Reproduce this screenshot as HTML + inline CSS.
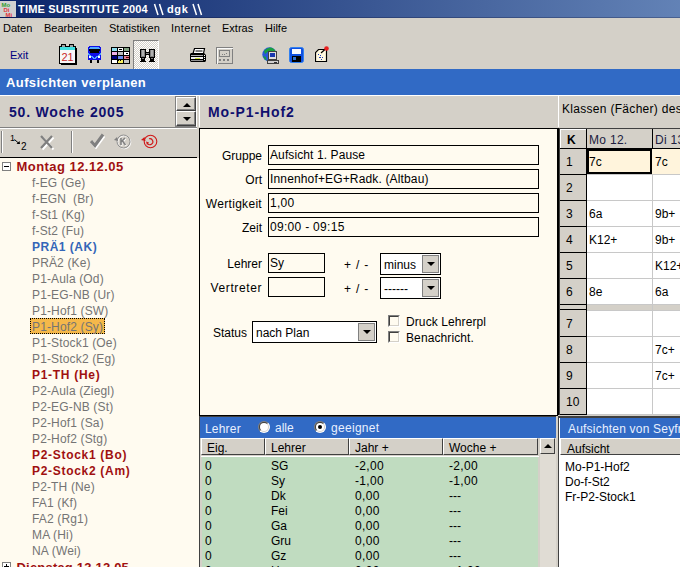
<!DOCTYPE html>
<html><head><meta charset="utf-8"><style>
html,body{margin:0;padding:0;}
body{width:680px;height:567px;overflow:hidden;position:relative;background:#D4D0C8;font-family:"Liberation Sans",sans-serif;}
body>div{position:absolute;white-space:nowrap;}
</style></head><body>
<div style="left:0px;top:0px;width:680px;height:18px;background:linear-gradient(to right,#0A246A 0px,#A6CAF0 1200px);"></div>
<div style="left:0px;top:1px;width:16px;height:16px;background:#D0D0D0;"></div>
<svg style="position:absolute;left:0px;top:1px" width="16" height="16" viewBox="0 0 16 16" shape-rendering="crispEdges"><text x="1.5" y="5.5" font-family="Liberation Sans" font-weight="bold" font-size="6" fill="#30A030" shape-rendering="auto">Mo</text><text x="3.5" y="10.5" font-family="Liberation Sans" font-weight="bold" font-size="6" fill="#E03838" shape-rendering="auto">Di</text><text x="5.5" y="15.5" font-family="Liberation Sans" font-weight="bold" font-size="6" fill="#E03838" shape-rendering="auto">Mi</text></svg>
<div style="left:18px;top:4px;font-size:11px;line-height:11px;font-weight:bold;color:#fff;letter-spacing:0.2px;">TIME SUBSTITUTE 2004</div>
<div style="left:167px;top:4px;font-size:11px;line-height:11px;font-weight:bold;color:#fff;letter-spacing:0.6px;">dgk</div>
<svg style="position:absolute;left:152px;top:3px" width="52" height="13" viewBox="0 0 52 13" shape-rendering="crispEdges"><path d="M2.5 1 L6 12 M7.5 1 L11 12 M41 1 L44.5 12 M46 1 L49.5 12" stroke="#fff" stroke-width="1.5" shape-rendering="auto"/></svg>
<div style="left:0px;top:17px;width:680px;height:1px;background:rgba(0,0,30,0.25);"></div>
<div style="left:3px;top:23px;font-size:11px;line-height:11px;font-weight:normal;color:#000;">Daten</div>
<div style="left:44px;top:23px;font-size:11px;line-height:11px;font-weight:normal;color:#000;">Bearbeiten</div>
<div style="left:109px;top:23px;font-size:11px;line-height:11px;font-weight:normal;color:#000;">Statistiken</div>
<div style="left:171px;top:23px;font-size:11px;line-height:11px;font-weight:normal;color:#000;letter-spacing:0.3px;">Internet</div>
<div style="left:222px;top:23px;font-size:11px;line-height:11px;font-weight:normal;color:#000;">Extras</div>
<div style="left:265px;top:23px;font-size:11px;line-height:11px;font-weight:normal;color:#000;">Hilfe</div>
<div style="left:10px;top:50px;font-size:11px;line-height:11px;font-weight:normal;color:#000080;">Exit</div>
<svg style="position:absolute;left:59px;top:43px" width="19" height="23" viewBox="0 0 19 23" shape-rendering="crispEdges"><rect x="2" y="5" width="16" height="17" fill="#000"/><rect x="0" y="3" width="17" height="18" fill="#000"/><rect x="1" y="4" width="15" height="3" fill="#40E0E0"/><rect x="1" y="7" width="15" height="13" fill="#F8F8F8"/><rect x="2" y="1" width="5" height="3" fill="#000"/><rect x="3" y="2" width="3" height="2" fill="#A0A0A0"/><rect x="10" y="1" width="5" height="3" fill="#000"/><rect x="11" y="2" width="3" height="2" fill="#A0A0A0"/><text x="8.5" y="17.5" font-family="Liberation Sans" font-size="11" fill="#C82828" text-anchor="middle" shape-rendering="auto">21</text></svg>
<svg style="position:absolute;left:88px;top:46px" width="13" height="17" viewBox="0 0 13 17" shape-rendering="crispEdges"><path d="M2 0 H11 Q13 0 13 3 V14 H0 V3 Q0 0 2 0 Z" fill="#1010E8"/><path d="M2 1 H11 L12 3 H1 Z" fill="#50A8FF"/><path d="M1 3 H12 L11 7 H2 Z" fill="#000"/><path d="M0 7 L6.5 12 L13 7 V9 L6.5 13.5 L0 9 Z" fill="#50A8FF"/><rect x="1" y="10" width="2" height="2" fill="#fff"/><rect x="10" y="10" width="2" height="2" fill="#fff"/><rect x="2" y="14" width="2" height="3" fill="#000"/><rect x="9" y="14" width="2" height="3" fill="#000"/></svg>
<svg style="position:absolute;left:111px;top:47px" width="19" height="17" viewBox="0 0 19 17" shape-rendering="crispEdges"><rect x="0" y="0" width="19" height="17" fill="#000"/><rect x="1" y="1" width="5" height="3" fill="#90E0F0"/><rect x="7" y="1" width="5" height="3" fill="#FFFFFF"/><rect x="13" y="1" width="5" height="3" fill="#80A080"/><rect x="1" y="5" width="5" height="3" fill="#F0B0E8"/><rect x="7" y="5" width="5" height="3" fill="#C0C0C0"/><rect x="13" y="5" width="5" height="3" fill="#FFFFFF"/><rect x="1" y="9" width="5" height="3" fill="#000080"/><rect x="7" y="9" width="5" height="3" fill="#6A8CF0"/><rect x="13" y="9" width="5" height="3" fill="#E08090"/><rect x="1" y="13" width="5" height="3" fill="#FFFFFF"/><rect x="7" y="13" width="5" height="3" fill="#F8F060"/><rect x="13" y="13" width="5" height="3" fill="#C8C8C8"/><rect x="15" y="6" width="2" height="1" fill="#000"/><rect x="15" y="10" width="3" height="1" fill="#600000"/><rect x="7" y="13" width="1" height="1" fill="#000"/><rect x="9" y="13" width="1" height="1" fill="#000"/><rect x="8" y="2" width="3" height="1" fill="#000"/></svg>
<div style="left:133px;top:40px;width:26px;height:29px;background:repeating-conic-gradient(#FFFFFF 0 25%, #D4D0C8 0 50%) 0 0/2px 2px;border-top:1px solid #808080;border-left:1px solid #808080;border-right:1px solid #fff;box-sizing:border-box;"></div>
<svg style="position:absolute;left:140px;top:49px" width="15" height="13" viewBox="0 0 15 13" shape-rendering="crispEdges"><rect x="0" y="0" width="6" height="9" fill="#000"/><rect x="9" y="0" width="6" height="9" fill="#000"/><rect x="1" y="1" width="4" height="7" fill="#808080"/><rect x="10" y="1" width="4" height="7" fill="#808080"/><rect x="2" y="1" width="2" height="6" fill="#B0B0B0"/><rect x="11" y="1" width="2" height="6" fill="#B0B0B0"/><rect x="5" y="3" width="5" height="3" fill="#000"/><rect x="6" y="4" width="3" height="1" fill="#808080"/><rect x="1" y="9" width="4" height="3" fill="#000"/><rect x="10" y="9" width="4" height="3" fill="#000"/><rect x="2" y="9" width="2" height="1" fill="#808080"/><rect x="11" y="9" width="2" height="1" fill="#808080"/><rect x="0" y="12" width="6" height="1" fill="#000"/><rect x="9" y="12" width="6" height="1" fill="#000"/></svg>
<svg style="position:absolute;left:189px;top:47px" width="18" height="16" viewBox="0 0 18 16" shape-rendering="crispEdges"><path d="M5.5 1.5 H15.5 L14.5 6.5 H4 Z" fill="#fff" stroke="#000" stroke-width="1.2" shape-rendering="auto"/><path d="M6.5 4 H13.5" stroke="#000" stroke-width="1" shape-rendering="auto"/><path d="M2 6 H15 L17 8 V14 L16 15 H2 L1 14 V7 Z" fill="#000" shape-rendering="auto"/><rect x="2" y="8" width="12" height="1" fill="#B0B0B0"/><rect x="2" y="10" width="12" height="2" fill="#F0F0F0"/><rect x="6" y="11" width="5" height="1" fill="#D0E040"/><rect x="2" y="13" width="12" height="1" fill="#909090"/><rect x="15" y="8" width="1" height="1" fill="#fff"/><rect x="15" y="10" width="1" height="1" fill="#fff"/><rect x="15" y="12" width="1" height="1" fill="#fff"/></svg>
<svg style="position:absolute;left:216px;top:47px" width="17" height="17" viewBox="0 0 17 17" shape-rendering="crispEdges"><rect x="0" y="0" width="16" height="16" fill="none" stroke="#808080" stroke-width="1" transform="translate(0.5 0.5)"/><rect x="1" y="1" width="16" height="16" fill="none" stroke="#fff" stroke-width="1" transform="translate(0.5 0.5)" opacity="0.9"/><rect x="3" y="3" width="10" height="6" fill="none" stroke="#808080" transform="translate(0.5 0.5)"/><rect x="6" y="7" width="1" height="1" fill="#808080"/><rect x="8" y="7" width="1" height="1" fill="#808080"/><rect x="10" y="6" width="1" height="1" fill="#808080"/><rect x="3" y="12" width="2" height="2" fill="#808080"/><rect x="7" y="12" width="2" height="2" fill="#808080"/><rect x="11" y="12" width="2" height="2" fill="#808080"/></svg>
<svg style="position:absolute;left:262px;top:47px" width="17" height="17" viewBox="0 0 17 17" shape-rendering="crispEdges"><circle cx="7.5" cy="7.5" r="7.2" fill="#2858D8" shape-rendering="auto"/><path d="M2 4 Q5 0.5 9 0.5 Q12 1 13.5 4 L10 6 L6 4.5 L3 7 Z" fill="#18A040" shape-rendering="auto"/><path d="M1 9 L4 10 L4.5 13.5 Q2 12 1 9 Z" fill="#18A040" shape-rendering="auto"/><rect x="6" y="4" width="9" height="9" fill="#404040"/><rect x="7" y="5" width="7" height="7" fill="#E0E0E0"/><rect x="8" y="6" width="5" height="4" fill="#1838B0"/><rect x="5" y="13" width="12" height="4" fill="#404040"/><rect x="6" y="14" width="10" height="2" fill="#D0D0D0"/><rect x="12" y="15" width="3" height="1" fill="#303030"/></svg>
<svg style="position:absolute;left:289px;top:47px" width="15" height="17" viewBox="0 0 15 17" shape-rendering="crispEdges"><rect x="0.5" y="0.5" width="14" height="15" rx="2" fill="#1050E0" stroke="#3080F0" stroke-width="1" shape-rendering="auto"/><rect x="3" y="2" width="9" height="5" fill="#F8F8FF"/><rect x="3" y="9" width="9" height="6" fill="#000"/><rect x="4" y="10" width="3" height="3" fill="#3070D0"/></svg>
<svg style="position:absolute;left:315px;top:46px" width="15" height="17" viewBox="0 0 15 17" shape-rendering="crispEdges"><path d="M3.5 3.5 H11.5 V15.5 H0.5 V6.5 Z" fill="#FFF8E0" stroke="#000" stroke-width="1.2" shape-rendering="auto"/><rect x="3" y="8" width="1" height="1" fill="#2040C0"/><rect x="5" y="9" width="1" height="1" fill="#2040C0"/><rect x="4" y="11" width="2" height="1" fill="#2040C0"/><rect x="7" y="11" width="1" height="1" fill="#2040C0"/><rect x="6" y="13" width="1" height="1" fill="#2040C0"/><path d="M6 7 L11 2.5" stroke="#000" stroke-width="1.2" shape-rendering="auto"/><circle cx="11.5" cy="2.5" r="2.3" fill="#E82020" shape-rendering="auto"/></svg>
<div style="left:0px;top:69px;width:680px;height:26px;background:#316AC5;"></div>
<div style="left:0px;top:95px;width:680px;height:1px;background:#fff;"></div>
<div style="left:6px;top:76px;font-size:13px;line-height:13px;font-weight:bold;color:#fff;letter-spacing:0.4px;">Aufsichten verplanen</div>
<div style="left:0px;top:96px;width:197px;height:31px;background:#D4D0C8;"></div>
<div style="left:0px;top:127px;width:197px;height:1px;background:#808080;"></div>
<div style="left:9px;top:105px;font-size:14px;line-height:14px;font-weight:bold;color:#10106E;letter-spacing:0.8px;">50. Woche 2005</div>
<div style="left:175px;top:96px;width:22px;height:31px;background:#808080;"></div>
<div style="left:176px;top:97px;width:20px;height:14px;background:#D4D0C8;border-top:1px solid #fff;border-left:1px solid #fff;border-right:1px solid #404040;border-bottom:1px solid #404040;box-sizing:border-box;box-shadow:inset -1px -1px 0 #808080;"></div>
<div style="left:176px;top:111px;width:20px;height:15px;background:#D4D0C8;border-top:1px solid #fff;border-left:1px solid #fff;border-right:1px solid #404040;border-bottom:1px solid #404040;box-sizing:border-box;box-shadow:inset -1px -1px 0 #808080;"></div>
<div style="left:196px;top:96px;width:1px;height:31px;background:#fff;"></div>
<div style="left:183px;top:103px;width:0;height:0;border-left:4px solid transparent;border-right:4px solid transparent;border-bottom:4px solid #000;"></div>
<div style="left:183px;top:117px;width:0;height:0;border-left:4px solid transparent;border-right:4px solid transparent;border-top:4px solid #000;"></div>
<div style="left:0px;top:128px;width:197px;height:1px;background:#fff;"></div>
<div style="left:0px;top:129px;width:197px;height:28px;background:#D4D0C8;"></div>
<div style="left:0px;top:157px;width:198px;height:1px;background:#000;"></div>
<div style="left:1px;top:131px;width:1px;height:22px;background:#808080;"></div>
<div style="left:2px;top:131px;width:1px;height:22px;background:#fff;"></div>
<div style="left:71px;top:131px;width:1px;height:22px;background:#808080;"></div>
<div style="left:72px;top:131px;width:1px;height:22px;background:#fff;"></div>
<svg style="position:absolute;left:9px;top:133px" width="19" height="19" viewBox="0 0 19 19" shape-rendering="crispEdges"><text x="1" y="8" font-family="Liberation Sans" font-size="9" fill="#000">1</text><text x="12" y="17" font-family="Liberation Sans" font-size="10" fill="#000">2</text><path d="M5.5 6.5 L10 10.5" stroke="#000" stroke-width="1" shape-rendering="auto"/><path d="M7.5 11 L11 11 L10.5 8 Z" fill="#000" shape-rendering="auto"/></svg>
<svg style="position:absolute;left:39px;top:134px" width="16" height="17" viewBox="0 0 16 17" shape-rendering="crispEdges"><path d="M2.5 2.5 L13.5 14.5 M13.5 2.5 L2.5 14.5" stroke="#fff" stroke-width="2" transform="translate(1 1)" shape-rendering="auto"/><path d="M2 2 L13 14 M13 2 L2 14" stroke="#808080" stroke-width="2.2" shape-rendering="auto"/></svg>
<svg style="position:absolute;left:90px;top:133px" width="15" height="16" viewBox="0 0 15 16" shape-rendering="crispEdges"><path d="M1 8 L5 13 L13 2" stroke="#fff" stroke-width="3" fill="none" transform="translate(1 1)" shape-rendering="auto"/><path d="M1 8 L5 12.5 L13 1.5" stroke="#808080" stroke-width="3" fill="none" shape-rendering="auto"/></svg>
<svg style="position:absolute;left:113px;top:134px" width="20" height="16" viewBox="0 0 20 16" shape-rendering="crispEdges"><circle cx="10.5" cy="7.5" r="6.5" stroke="#fff" stroke-width="1" fill="none" transform="translate(0.8 0.8)" shape-rendering="auto"/><circle cx="10.5" cy="7.5" r="6.5" stroke="#909090" stroke-width="1" fill="none" shape-rendering="auto"/><path d="M8 4 V11 M8 8 L12 4 M9.5 7 L12.5 11" stroke="#fff" stroke-width="1.6" fill="none" transform="translate(0.7 0.7)" shape-rendering="auto"/><path d="M8 4 V11 M8 8 L12 4 M9.5 7 L12.5 11" stroke="#808080" stroke-width="1.6" fill="none" shape-rendering="auto"/><path d="M1 6 L4 3 L5 7 Z" fill="#808080" shape-rendering="auto"/></svg>
<svg style="position:absolute;left:140px;top:133px" width="20" height="17" viewBox="0 0 20 17" shape-rendering="crispEdges"><circle cx="10.5" cy="8.5" r="6.3" stroke="#D01818" stroke-width="1.1" fill="none" shape-rendering="auto"/><path d="M7.5 10.5 A3 3 0 1 0 9 5.8" stroke="#D01818" stroke-width="1.1" fill="none" shape-rendering="auto"/><path d="M1 7 L4.5 4 L5.5 8 Z" fill="#D01818" shape-rendering="auto"/><path d="M6 8.5 L9 9.5 L7 12 Z" fill="#D01818" shape-rendering="auto"/></svg>
<div style="left:0px;top:158px;width:199px;height:409px;background:#FFFBF0;"></div>
<div style="left:16.5px;top:160px;font-size:13px;line-height:13px;font-weight:bold;color:#A01010;letter-spacing:0.45px;">Montag 12.12.05</div>
<div style="left:32px;top:177px;font-size:12px;line-height:12px;font-weight:normal;color:#747474;letter-spacing:0.15px;">f-EG (Ge)</div>
<div style="left:32px;top:193px;font-size:12px;line-height:12px;font-weight:normal;color:#747474;letter-spacing:0.15px;">f-EGN&nbsp; (Br)</div>
<div style="left:32px;top:209px;font-size:12px;line-height:12px;font-weight:normal;color:#747474;letter-spacing:0.15px;">f-St1 (Kg)</div>
<div style="left:32px;top:225px;font-size:12px;line-height:12px;font-weight:normal;color:#747474;letter-spacing:0.15px;">f-St2 (Fu)</div>
<div style="left:32px;top:241px;font-size:12px;line-height:12px;font-weight:bold;color:#3466B8;letter-spacing:0.5px;">PRÄ1 (AK)</div>
<div style="left:32px;top:257px;font-size:12px;line-height:12px;font-weight:normal;color:#747474;letter-spacing:0.15px;">PRÄ2 (Ke)</div>
<div style="left:32px;top:273px;font-size:12px;line-height:12px;font-weight:normal;color:#747474;letter-spacing:0.15px;">P1-Aula (Od)</div>
<div style="left:32px;top:289px;font-size:12px;line-height:12px;font-weight:normal;color:#747474;letter-spacing:0.15px;">P1-EG-NB (Ur)</div>
<div style="left:32px;top:305px;font-size:12px;line-height:12px;font-weight:normal;color:#747474;letter-spacing:0.15px;">P1-Hof1 (SW)</div>
<div style="left:30px;top:318px;width:75px;height:16px;background:#F5B84A;outline:1px dotted #000;outline-offset:-1px;"></div>
<div style="left:32px;top:321px;font-size:12px;line-height:12px;font-weight:normal;color:#747474;letter-spacing:0.15px;">P1-Hof2 (Sy)</div>
<div style="left:32px;top:337px;font-size:12px;line-height:12px;font-weight:normal;color:#747474;letter-spacing:0.15px;">P1-Stock1 (Oe)</div>
<div style="left:32px;top:353px;font-size:12px;line-height:12px;font-weight:normal;color:#747474;letter-spacing:0.15px;">P1-Stock2 (Eg)</div>
<div style="left:32px;top:369px;font-size:12px;line-height:12px;font-weight:bold;color:#A01010;letter-spacing:0.7px;">P1-TH (He)</div>
<div style="left:32px;top:385px;font-size:12px;line-height:12px;font-weight:normal;color:#747474;letter-spacing:0.15px;">P2-Aula (Ziegl)</div>
<div style="left:32px;top:401px;font-size:12px;line-height:12px;font-weight:normal;color:#747474;letter-spacing:0.15px;">P2-EG-NB (St)</div>
<div style="left:32px;top:417px;font-size:12px;line-height:12px;font-weight:normal;color:#747474;letter-spacing:0.15px;">P2-Hof1 (Sa)</div>
<div style="left:32px;top:433px;font-size:12px;line-height:12px;font-weight:normal;color:#747474;letter-spacing:0.15px;">P2-Hof2 (Stg)</div>
<div style="left:32px;top:449px;font-size:12px;line-height:12px;font-weight:bold;color:#A01010;letter-spacing:0.7px;">P2-Stock1 (Bo)</div>
<div style="left:32px;top:465px;font-size:12px;line-height:12px;font-weight:bold;color:#A01010;letter-spacing:0.7px;">P2-Stock2 (Am)</div>
<div style="left:32px;top:481px;font-size:12px;line-height:12px;font-weight:normal;color:#747474;letter-spacing:0.15px;">P2-TH (Ne)</div>
<div style="left:32px;top:497px;font-size:12px;line-height:12px;font-weight:normal;color:#747474;letter-spacing:0.15px;">FA1 (Kf)</div>
<div style="left:32px;top:513px;font-size:12px;line-height:12px;font-weight:normal;color:#747474;letter-spacing:0.15px;">FA2 (Rg1)</div>
<div style="left:32px;top:529px;font-size:12px;line-height:12px;font-weight:normal;color:#747474;letter-spacing:0.15px;">MA (Hi)</div>
<div style="left:32px;top:545px;font-size:12px;line-height:12px;font-weight:normal;color:#747474;letter-spacing:0.15px;">NA (Wei)</div>
<div style="left:16.5px;top:561px;font-size:13px;line-height:13px;font-weight:bold;color:#A01010;letter-spacing:0.2px;">Dienstag 13.12.05</div>
<div style="left:2px;top:162px;width:9px;height:9px;border:1px solid #808080;box-sizing:border-box;background:#fff;"></div>
<div style="left:4px;top:166px;width:5px;height:1px;background:#000;"></div>
<div style="left:2px;top:562px;width:9px;height:9px;border:1px solid #808080;box-sizing:border-box;background:#fff;"></div>
<div style="left:4px;top:566px;width:5px;height:1px;background:#000;"></div>
<div style="left:6px;top:564px;width:1px;height:5px;background:#000;"></div>
<div style="left:197px;top:96px;width:2px;height:62px;background:#D4D0C8;"></div>
<div style="left:199px;top:96px;width:358px;height:31px;background:#D4D0C8;"></div>
<div style="left:199px;top:96px;width:1px;height:31px;background:#fff;"></div>
<div style="left:208px;top:105px;font-size:14px;line-height:14px;font-weight:bold;color:#10106E;letter-spacing:0.9px;">Mo-P1-Hof2</div>
<div style="left:199px;top:128px;width:359px;height:288px;background:#FFFBF0;border:1px solid #000;box-sizing:border-box;"></div>
<div style="left:268px;top:145px;width:271px;height:20px;border:1px solid #000;box-sizing:border-box;background:#FFFBF0;"></div>
<div style="left:160px;width:102px;text-align:right;top:150px;font-size:12px;line-height:12px;">Gruppe</div>
<div style="left:270px;top:149px;font-size:12px;line-height:12px;font-weight:normal;color:#000;letter-spacing:0.1px;">Aufsicht 1. Pause</div>
<div style="left:268px;top:169px;width:271px;height:20px;border:1px solid #000;box-sizing:border-box;background:#FFFBF0;"></div>
<div style="left:160px;width:102px;text-align:right;top:174px;font-size:12px;line-height:12px;">Ort</div>
<div style="left:270px;top:173px;font-size:12px;line-height:12px;font-weight:normal;color:#000;letter-spacing:0.15px;">Innenhof+EG+Radk. (Altbau)</div>
<div style="left:268px;top:193px;width:271px;height:20px;border:1px solid #000;box-sizing:border-box;background:#FFFBF0;"></div>
<div style="left:160px;width:102px;text-align:right;top:198px;font-size:12px;line-height:12px;letter-spacing:0.3px;">Wertigkeit</div>
<div style="left:270px;top:197px;font-size:12px;line-height:12px;font-weight:normal;color:#000;letter-spacing:0.3px;">1,00</div>
<div style="left:268px;top:217px;width:271px;height:20px;border:1px solid #000;box-sizing:border-box;background:#FFFBF0;"></div>
<div style="left:160px;width:102px;text-align:right;top:222px;font-size:12px;line-height:12px;">Zeit</div>
<div style="left:270px;top:221px;font-size:12px;line-height:12px;font-weight:normal;color:#000;letter-spacing:0.3px;">09:00 - 09:15</div>
<div style="left:160px;width:102px;text-align:right;top:258px;font-size:12px;line-height:12px">Lehrer</div>
<div style="left:160px;width:102px;text-align:right;top:282px;font-size:12px;line-height:12px;letter-spacing:0.6px">Vertreter</div>
<div style="left:268px;top:253px;width:57px;height:20px;border:1px solid #000;box-sizing:border-box;"></div>
<div style="left:268px;top:277px;width:57px;height:20px;border:1px solid #000;box-sizing:border-box;"></div>
<div style="left:270px;top:257px;font-size:12px;line-height:12px;font-weight:normal;color:#000;">Sy</div>
<div style="left:344px;top:259px;font-size:12px;line-height:12px;font-weight:normal;color:#000;letter-spacing:0.8px;">+ / -</div>
<div style="left:344px;top:283px;font-size:12px;line-height:12px;font-weight:normal;color:#000;letter-spacing:0.8px;">+ / -</div>
<div style="left:380px;top:253px;width:61px;height:22px;border:1px solid #000;box-sizing:border-box;background:#fff;"></div>
<div style="left:422px;top:255px;width:17px;height:18px;border:1px solid #808080;box-sizing:border-box;background:#D4D0C8;"></div>
<div style="left:427px;top:262px;width:0;height:0;border-left:4px solid transparent;border-right:4px solid transparent;border-top:4px solid #000;"></div>
<div style="left:384px;top:259px;font-size:12px;line-height:12px;font-weight:normal;color:#000;">minus</div>
<div style="left:380px;top:277px;width:61px;height:22px;border:1px solid #000;box-sizing:border-box;background:#fff;"></div>
<div style="left:422px;top:279px;width:17px;height:18px;border:1px solid #808080;box-sizing:border-box;background:#D4D0C8;"></div>
<div style="left:427px;top:286px;width:0;height:0;border-left:4px solid transparent;border-right:4px solid transparent;border-top:4px solid #000;"></div>
<div style="left:384px;top:283px;font-size:12px;line-height:12px;font-weight:normal;color:#000;">------</div>
<div style="left:252px;top:321px;width:125px;height:22px;border:1px solid #000;box-sizing:border-box;background:#fff;"></div>
<div style="left:358px;top:323px;width:17px;height:18px;border:1px solid #808080;box-sizing:border-box;background:#D4D0C8;"></div>
<div style="left:363px;top:330px;width:0;height:0;border-left:4px solid transparent;border-right:4px solid transparent;border-top:4px solid #000;"></div>
<div style="left:256px;top:327px;font-size:12px;line-height:12px;font-weight:normal;color:#000;">nach Plan</div>
<div style="left:160px;width:87px;text-align:right;top:327px;font-size:12px;line-height:12px">Status</div>
<div style="left:388px;top:315px;width:12px;height:12px;border-top:1px solid #808080;border-left:1px solid #808080;border-right:1px solid #fff;border-bottom:1px solid #fff;box-sizing:border-box;background:#FFFBF0;"></div>
<div style="left:389px;top:316px;width:10px;height:10px;border-top:1px solid #404040;border-left:1px solid #404040;border-right:1px solid #D4D0C8;border-bottom:1px solid #D4D0C8;box-sizing:border-box;"></div>
<div style="left:388px;top:331px;width:12px;height:12px;border-top:1px solid #808080;border-left:1px solid #808080;border-right:1px solid #fff;border-bottom:1px solid #fff;box-sizing:border-box;background:#FFFBF0;"></div>
<div style="left:389px;top:332px;width:10px;height:10px;border-top:1px solid #404040;border-left:1px solid #404040;border-right:1px solid #D4D0C8;border-bottom:1px solid #D4D0C8;box-sizing:border-box;"></div>
<div style="left:406px;top:316px;font-size:12px;line-height:12px;font-weight:normal;color:#000;letter-spacing:0.1px;">Druck Lehrerpl</div>
<div style="left:406px;top:332px;font-size:12px;line-height:12px;font-weight:normal;color:#000;letter-spacing:0.1px;">Benachricht.</div>
<div style="left:558px;top:96px;width:122px;height:31px;background:#D4D0C8;"></div>
<div style="left:558px;top:95px;width:122px;height:1px;background:#fff;"></div>
<div style="left:558px;top:96px;width:1px;height:31px;background:#fff;"></div>
<div style="left:562px;top:103px;font-size:12px;line-height:12px;font-weight:normal;color:#000;letter-spacing:0.3px;">Klassen (Fächer) des Lehrers</div>
<div style="left:557px;top:128px;width:2px;height:288px;background:#000;"></div>
<div style="left:559px;top:128px;width:121px;height:288px;background:#fff;"></div>
<div style="left:559px;top:128px;width:1px;height:287px;background:#404040;"></div>
<div style="left:559px;top:128px;width:121px;height:1px;background:#404040;"></div>
<div style="left:560px;top:129px;width:120px;height:19px;background:#D4D0C8;"></div>
<div style="left:560px;top:129px;width:26px;height:286px;background:#D4D0C8;"></div>
<div style="left:560px;top:129px;width:1px;height:19px;background:#fff;"></div>
<div style="left:560px;top:129px;width:26px;height:1px;background:#fff;"></div>
<div style="left:586px;top:129px;width:1px;height:286px;background:#000;"></div>
<div style="left:560px;top:148px;width:120px;height:1px;background:#000;"></div>
<div style="left:560px;top:174px;width:26px;height:1px;background:#000;"></div>
<div style="left:587px;top:174px;width:93px;height:1px;background:#C8C8C8;"></div>
<div style="left:566px;top:156px;font-size:12px;line-height:12px;font-weight:normal;color:#000;">1</div>
<div style="left:560px;top:200px;width:26px;height:1px;background:#000;"></div>
<div style="left:587px;top:200px;width:93px;height:1px;background:#C8C8C8;"></div>
<div style="left:566px;top:182px;font-size:12px;line-height:12px;font-weight:normal;color:#000;">2</div>
<div style="left:560px;top:226px;width:26px;height:1px;background:#000;"></div>
<div style="left:587px;top:226px;width:93px;height:1px;background:#C8C8C8;"></div>
<div style="left:566px;top:208px;font-size:12px;line-height:12px;font-weight:normal;color:#000;">3</div>
<div style="left:560px;top:252px;width:26px;height:1px;background:#000;"></div>
<div style="left:587px;top:252px;width:93px;height:1px;background:#C8C8C8;"></div>
<div style="left:566px;top:234px;font-size:12px;line-height:12px;font-weight:normal;color:#000;">4</div>
<div style="left:560px;top:278px;width:26px;height:1px;background:#000;"></div>
<div style="left:587px;top:278px;width:93px;height:1px;background:#C8C8C8;"></div>
<div style="left:566px;top:260px;font-size:12px;line-height:12px;font-weight:normal;color:#000;">5</div>
<div style="left:560px;top:304px;width:26px;height:1px;background:#000;"></div>
<div style="left:587px;top:304px;width:93px;height:1px;background:#C8C8C8;"></div>
<div style="left:566px;top:286px;font-size:12px;line-height:12px;font-weight:normal;color:#000;">6</div>
<div style="left:560px;top:336px;width:26px;height:1px;background:#000;"></div>
<div style="left:587px;top:336px;width:93px;height:1px;background:#C8C8C8;"></div>
<div style="left:566px;top:318px;font-size:12px;line-height:12px;font-weight:normal;color:#000;">7</div>
<div style="left:560px;top:362px;width:26px;height:1px;background:#000;"></div>
<div style="left:587px;top:362px;width:93px;height:1px;background:#C8C8C8;"></div>
<div style="left:566px;top:344px;font-size:12px;line-height:12px;font-weight:normal;color:#000;">8</div>
<div style="left:560px;top:388px;width:26px;height:1px;background:#000;"></div>
<div style="left:587px;top:388px;width:93px;height:1px;background:#C8C8C8;"></div>
<div style="left:566px;top:370px;font-size:12px;line-height:12px;font-weight:normal;color:#000;">9</div>
<div style="left:560px;top:414px;width:26px;height:1px;background:#000;"></div>
<div style="left:587px;top:414px;width:93px;height:1px;background:#C8C8C8;"></div>
<div style="left:566px;top:396px;font-size:12px;line-height:12px;font-weight:normal;color:#000;">10</div>
<div style="left:560px;top:304px;width:26px;height:1px;background:#000;"></div>
<div style="left:587px;top:304px;width:93px;height:1px;background:#C8C8C8;"></div>
<div style="left:587px;top:305px;width:93px;height:5px;background:#D4D0C8;"></div>
<div style="left:560px;top:309px;width:26px;height:1px;background:#000;"></div>
<div style="left:587px;top:310px;width:93px;height:1px;background:#C8C8C8;"></div>
<div style="left:652px;top:129px;width:1px;height:19px;background:#000;"></div>
<div style="left:652px;top:149px;width:1px;height:266px;background:#C8C8C8;"></div>
<div style="left:587px;top:149px;width:93px;height:25px;background:#FFF4DC;"></div>
<div style="left:587px;top:149px;width:65px;height:25px;border:2px solid #000;box-sizing:border-box;"></div>
<div style="left:567px;top:134px;font-size:12px;line-height:12px;font-weight:bold;color:#000;">K</div>
<div style="left:589px;top:134px;font-size:12px;line-height:12px;font-weight:normal;color:#202040;letter-spacing:0.3px;">Mo 12.</div>
<div style="left:655px;top:134px;font-size:12px;line-height:12px;font-weight:normal;color:#202040;letter-spacing:0.3px;">Di 13.</div>
<div style="left:589px;top:156px;font-size:12px;line-height:12px;font-weight:normal;color:#000;">7c</div>
<div style="left:655px;top:156px;font-size:12px;line-height:12px;font-weight:normal;color:#000;">7c</div>
<div style="left:589px;top:208px;font-size:12px;line-height:12px;font-weight:normal;color:#000;">6a</div>
<div style="left:655px;top:208px;font-size:12px;line-height:12px;font-weight:normal;color:#000;">9b+</div>
<div style="left:589px;top:234px;font-size:12px;line-height:12px;font-weight:normal;color:#000;">K12+</div>
<div style="left:655px;top:234px;font-size:12px;line-height:12px;font-weight:normal;color:#000;">9b+</div>
<div style="left:655px;top:260px;font-size:12px;line-height:12px;font-weight:normal;color:#000;">K12+</div>
<div style="left:589px;top:286px;font-size:12px;line-height:12px;font-weight:normal;color:#000;">8e</div>
<div style="left:655px;top:286px;font-size:12px;line-height:12px;font-weight:normal;color:#000;">6a</div>
<div style="left:655px;top:344px;font-size:12px;line-height:12px;font-weight:normal;color:#000;">7c+</div>
<div style="left:655px;top:370px;font-size:12px;line-height:12px;font-weight:normal;color:#000;">7c+</div>
<div style="left:558px;top:415px;width:122px;height:2px;background:#D4D0C8;"></div>
<div style="left:199px;top:416px;width:359px;height:151px;background:#D4D0C8;"></div>
<div style="left:199px;top:416px;width:357px;height:1px;background:#404040;"></div>
<div style="left:199px;top:416px;width:1px;height:151px;background:#404040;"></div>
<div style="left:200px;top:417px;width:356px;height:21px;background:#316AC5;"></div>
<div style="left:205px;top:423px;font-size:12px;line-height:12px;font-weight:normal;color:#E8F0FF;letter-spacing:0.2px;">Lehrer</div>
<div style="left:258px;top:421px;width:12px;height:12px;border-radius:50%;background:linear-gradient(135deg,#808080 0,#808080 50%,#fff 50%);"></div>
<div style="left:259px;top:422px;width:10px;height:10px;border-radius:50%;background:linear-gradient(135deg,#404040 0,#404040 50%,#D4D0C8 50%);"></div>
<div style="left:260px;top:423px;width:8px;height:8px;border-radius:50%;background:#fff;"></div>
<div style="left:314px;top:421px;width:12px;height:12px;border-radius:50%;background:linear-gradient(135deg,#808080 0,#808080 50%,#fff 50%);"></div>
<div style="left:315px;top:422px;width:10px;height:10px;border-radius:50%;background:linear-gradient(135deg,#404040 0,#404040 50%,#D4D0C8 50%);"></div>
<div style="left:316px;top:423px;width:8px;height:8px;border-radius:50%;background:#fff;"></div>
<div style="left:318px;top:425px;width:4px;height:4px;background:#000;border-radius:50%;"></div>
<div style="left:275px;top:422px;font-size:12px;line-height:12px;font-weight:normal;color:#E8F0FF;">alle</div>
<div style="left:331px;top:422px;font-size:12px;line-height:12px;font-weight:normal;color:#E8F0FF;letter-spacing:0.3px;">geeignet</div>
<div style="left:201px;top:438px;width:64px;height:17px;background:#D4D0C8;border-top:1px solid #fff;border-left:1px solid #fff;border-right:1px solid #404040;border-bottom:1px solid #404040;box-sizing:border-box;"></div>
<div style="left:207px;top:442px;font-size:12px;line-height:12px;font-weight:normal;color:#000;">Eig.</div>
<div style="left:265px;top:438px;width:84px;height:17px;background:#D4D0C8;border-top:1px solid #fff;border-left:1px solid #fff;border-right:1px solid #404040;border-bottom:1px solid #404040;box-sizing:border-box;"></div>
<div style="left:271px;top:442px;font-size:12px;line-height:12px;font-weight:normal;color:#000;">Lehrer</div>
<div style="left:349px;top:438px;width:94px;height:17px;background:#D4D0C8;border-top:1px solid #fff;border-left:1px solid #fff;border-right:1px solid #404040;border-bottom:1px solid #404040;box-sizing:border-box;"></div>
<div style="left:355px;top:442px;font-size:12px;line-height:12px;font-weight:normal;color:#000;">Jahr +</div>
<div style="left:443px;top:438px;width:95px;height:17px;background:#D4D0C8;border-top:1px solid #fff;border-left:1px solid #fff;border-right:1px solid #404040;border-bottom:1px solid #404040;box-sizing:border-box;"></div>
<div style="left:449px;top:442px;font-size:12px;line-height:12px;font-weight:normal;color:#000;">Woche +</div>
<div style="left:202px;top:457px;width:336px;height:110px;background:#C0DCC0;"></div>
<div style="left:201px;top:456px;width:338px;height:1px;background:#fff;"></div>
<div style="left:205px;top:460px;font-size:12px;line-height:12px;font-weight:normal;color:#000;">0</div>
<div style="left:271px;top:460px;font-size:12px;line-height:12px;font-weight:normal;color:#000;">SG</div>
<div style="left:355px;top:460px;font-size:12px;line-height:12px;font-weight:normal;color:#000;letter-spacing:0.35px;">-2,00</div>
<div style="left:449px;top:460px;font-size:12px;line-height:12px;font-weight:normal;color:#000;letter-spacing:0.35px;">-2,00</div>
<div style="left:205px;top:475px;font-size:12px;line-height:12px;font-weight:normal;color:#000;">0</div>
<div style="left:271px;top:475px;font-size:12px;line-height:12px;font-weight:normal;color:#000;">Sy</div>
<div style="left:355px;top:475px;font-size:12px;line-height:12px;font-weight:normal;color:#000;letter-spacing:0.35px;">-1,00</div>
<div style="left:449px;top:475px;font-size:12px;line-height:12px;font-weight:normal;color:#000;letter-spacing:0.35px;">-1,00</div>
<div style="left:205px;top:490px;font-size:12px;line-height:12px;font-weight:normal;color:#000;">0</div>
<div style="left:271px;top:490px;font-size:12px;line-height:12px;font-weight:normal;color:#000;">Dk</div>
<div style="left:355px;top:490px;font-size:12px;line-height:12px;font-weight:normal;color:#000;letter-spacing:0.35px;">0,00</div>
<div style="left:449px;top:490px;font-size:12px;line-height:12px;font-weight:normal;color:#000;">---</div>
<div style="left:205px;top:505px;font-size:12px;line-height:12px;font-weight:normal;color:#000;">0</div>
<div style="left:271px;top:505px;font-size:12px;line-height:12px;font-weight:normal;color:#000;">Fei</div>
<div style="left:355px;top:505px;font-size:12px;line-height:12px;font-weight:normal;color:#000;letter-spacing:0.35px;">0,00</div>
<div style="left:449px;top:505px;font-size:12px;line-height:12px;font-weight:normal;color:#000;">---</div>
<div style="left:205px;top:520px;font-size:12px;line-height:12px;font-weight:normal;color:#000;">0</div>
<div style="left:271px;top:520px;font-size:12px;line-height:12px;font-weight:normal;color:#000;">Ga</div>
<div style="left:355px;top:520px;font-size:12px;line-height:12px;font-weight:normal;color:#000;letter-spacing:0.35px;">0,00</div>
<div style="left:449px;top:520px;font-size:12px;line-height:12px;font-weight:normal;color:#000;">---</div>
<div style="left:205px;top:535px;font-size:12px;line-height:12px;font-weight:normal;color:#000;">0</div>
<div style="left:271px;top:535px;font-size:12px;line-height:12px;font-weight:normal;color:#000;">Gru</div>
<div style="left:355px;top:535px;font-size:12px;line-height:12px;font-weight:normal;color:#000;letter-spacing:0.35px;">0,00</div>
<div style="left:449px;top:535px;font-size:12px;line-height:12px;font-weight:normal;color:#000;">---</div>
<div style="left:205px;top:550px;font-size:12px;line-height:12px;font-weight:normal;color:#000;">0</div>
<div style="left:271px;top:550px;font-size:12px;line-height:12px;font-weight:normal;color:#000;">Gz</div>
<div style="left:355px;top:550px;font-size:12px;line-height:12px;font-weight:normal;color:#000;letter-spacing:0.35px;">0,00</div>
<div style="left:449px;top:550px;font-size:12px;line-height:12px;font-weight:normal;color:#000;">---</div>
<div style="left:205px;top:565px;font-size:12px;line-height:12px;font-weight:normal;color:#000;">0</div>
<div style="left:271px;top:565px;font-size:12px;line-height:12px;font-weight:normal;color:#000;">Ha</div>
<div style="left:355px;top:565px;font-size:12px;line-height:12px;font-weight:normal;color:#000;letter-spacing:0.35px;">0,00</div>
<div style="left:449px;top:565px;font-size:12px;line-height:12px;font-weight:normal;color:#000;letter-spacing:0.35px;">+1,00</div>
<div style="left:540px;top:438px;width:16px;height:129px;background:#E0DCD4;"></div>
<div style="left:540px;top:438px;width:15px;height:16px;background:#D4D0C8;border-top:1px solid #fff;border-left:1px solid #fff;border-right:1px solid #404040;border-bottom:1px solid #404040;box-sizing:border-box;"></div>
<div style="left:544px;top:444px;width:0;height:0;border-left:4px solid transparent;border-right:4px solid transparent;border-bottom:4px solid #000;"></div>
<div style="left:556px;top:416px;width:2px;height:151px;background:#D4D0C8;"></div>
<div style="left:558px;top:416px;width:122px;height:151px;background:#fff;"></div>
<div style="left:558px;top:416px;width:1px;height:151px;background:#404040;"></div>
<div style="left:558px;top:416px;width:122px;height:2px;background:#404040;"></div>
<div style="left:560px;top:418px;width:120px;height:20px;background:#316AC5;"></div>
<div style="left:568px;top:423px;font-size:12px;line-height:12px;font-weight:normal;color:#E8F0FF;letter-spacing:0.2px;">Aufsichten von Seyfried</div>
<div style="left:560px;top:438px;width:120px;height:17px;background:#D4D0C8;border-top:1px solid #fff;border-left:1px solid #fff;border-bottom:1px solid #404040;box-sizing:border-box;"></div>
<div style="left:567px;top:443px;font-size:12px;line-height:12px;font-weight:normal;color:#000;">Aufsicht</div>
<div style="left:565px;top:461px;font-size:12px;line-height:12px;font-weight:normal;color:#000;">Mo-P1-Hof2</div>
<div style="left:565px;top:476px;font-size:12px;line-height:12px;font-weight:normal;color:#000;">Do-f-St2</div>
<div style="left:565px;top:491px;font-size:12px;line-height:12px;font-weight:normal;color:#000;">Fr-P2-Stock1</div>
</body></html>
